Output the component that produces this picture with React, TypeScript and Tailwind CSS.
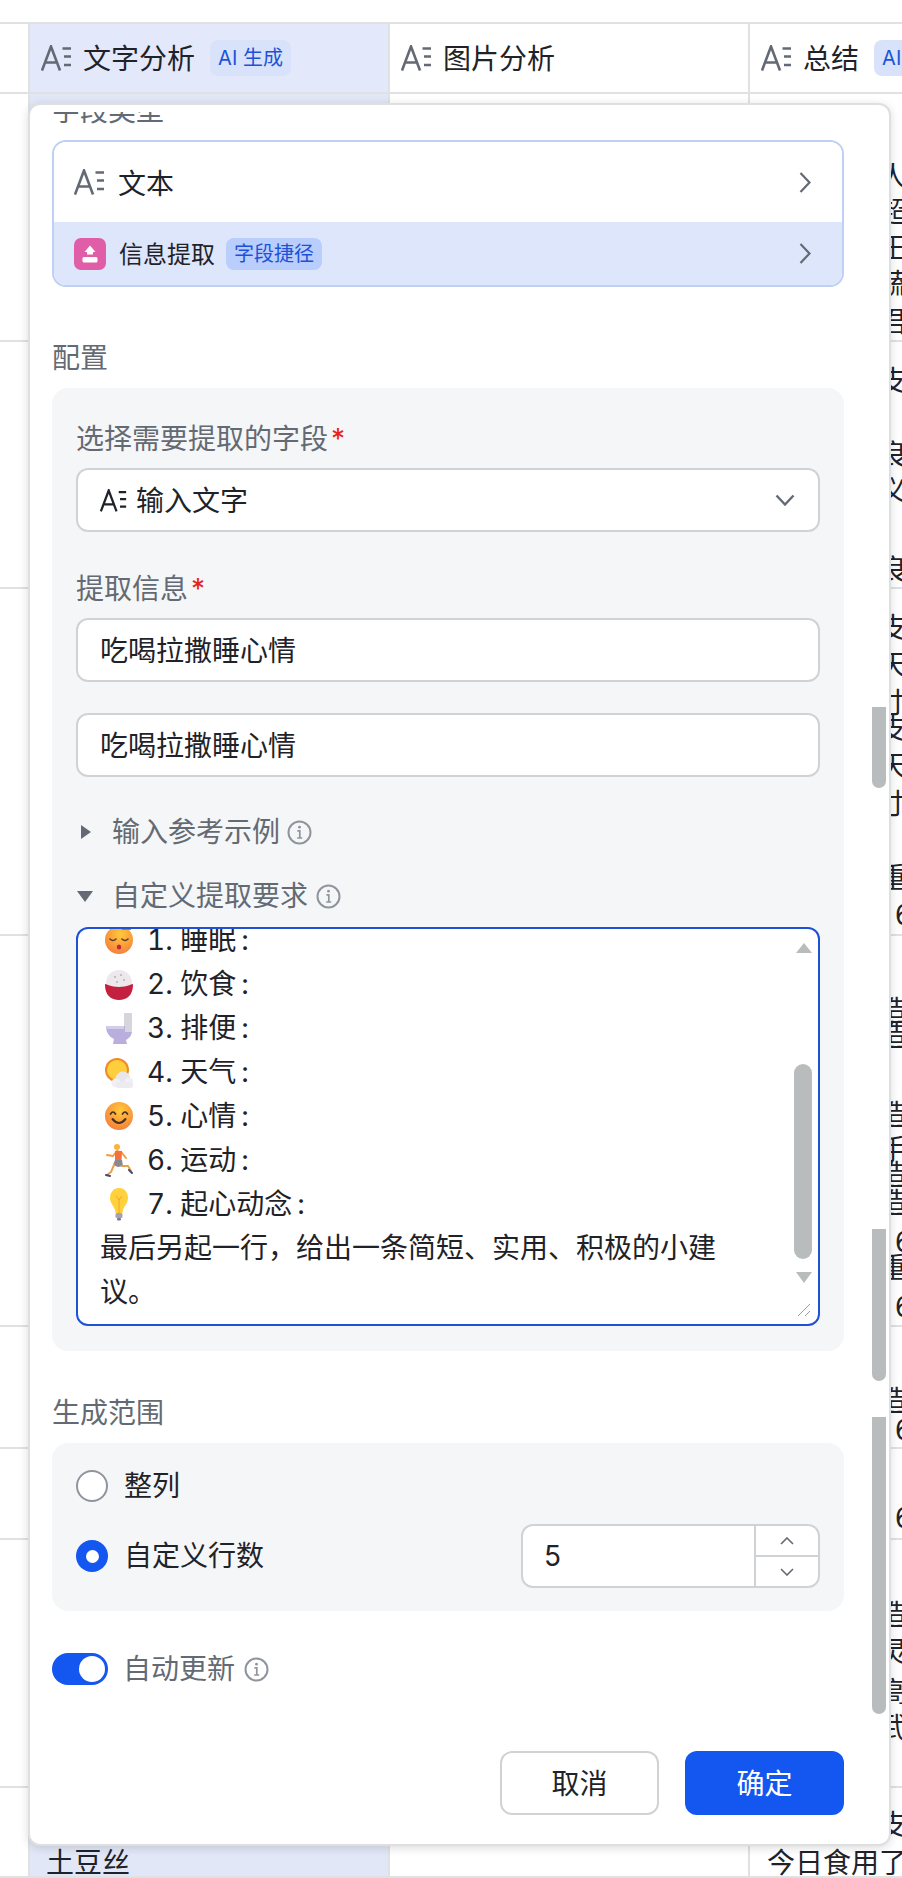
import type { ReactNode } from 'react';

const lineRows: { cls: string; lines: [string, string][] }[] = [
    {
        cls: 'h-[248px]',
        lines: [
            ['mt-[69px]', '今日记录人'],
            ['mt-[7px]', '今日心情超'],
            ['mt-[8px]', '今日工作王'],
            ['mt-[8px]', '今日早餐蔬'],
            ['mt-[10px]', '今日晚餐君'],
        ],
    },
    {
        cls: 'h-[247px]',
        lines: [
            ['mt-[25px]', '今日午后支'],
            ['mt-[46px]', '今日晚间良'],
            ['mt-[8px]', '今日心得义'],
            ['mt-[51px]', '今日总结良'],
        ],
    },
    {
        cls: 'h-[347px]',
        lines: [
            ['mt-[25px]', '今日午后支'],
            ['mt-[9px]', '今日晚间天'],
            ['mt-[10px]', '今日总结寸'],
            ['-mt-[2px]', '今日午后支'],
            ['mt-[9px]', '今日晚间天'],
            ['mt-[10px]', '今日总结寸'],
            ['mt-[17px]', '今日工作,'],
            ['mt-[1px]', '今日晚上重'],
            ['mt-[9px]', '今日用量: 6'],
        ],
    },
    {
        cls: 'h-[391px]',
        lines: [
            ['mt-[61px]', '今日晚上造'],
            ['-mt-[3px]', '今日晚间造'],
            ['mt-[51px]', '今日早上造'],
            ['mt-[7px]', '今日练习手'],
            ['-mt-[3px]', '今日午后造'],
            ['mt-[0px]', '今日晚间造'],
            ['mt-[11px]', '今日用量: 6'],
            ['-mt-[2px]', '今日晚上重'],
            ['mt-[11px]', '今日用量: 6'],
        ],
    },
    {
        cls: 'h-[122px]',
        lines: [
            ['mt-[60px]', '今日早上造'],
            ['mt-[1px]', '今日用量: 6'],
        ],
    },
    { cls: 'h-[91px]', lines: [['mt-[55px]', '今日用量: 6']] },
    {
        cls: 'h-[248px]',
        lines: [
            ['mt-[61px]', '今日早上造'],
            ['mt-[9px]', '今日午后灵'],
            ['mt-[12px]', '今日晚间高'],
            ['mt-[8px]', '今日总结武'],
        ],
    },
    {
        cls: 'h-[90px]',
        lines: [
            ['mt-[23px]', '今日午后支'],
            ['mt-[10px]', '今日食用了'],
        ],
    },
];

function TextIcon({ className }: { className: string }) {
    return (
        <svg className={className} viewBox="0 0 31 26" fill="none" stroke="currentColor" strokeWidth={2.6}>
            <path d="M1 25.5 10 1.5 19 25.5M4.3 17.5H15.7" />
            <path d="M21.5 3.5H30M23 11.5H30M23 20H30" />
        </svg>
    );
}

function InfoIcon() {
    return (
        <svg className="w-[25px] h-[25px] shrink-0 text-[#8f959e]" viewBox="0 0 25 25" fill="none" stroke="currentColor">
            <circle cx="12.5" cy="12.5" r="11" strokeWidth={2} />
            <circle cx="12.5" cy="7.2" r="1.4" fill="currentColor" stroke="none" />
            <path d="M10.4 10.8h2.4v7M10.2 18h5" strokeWidth={1.7} />
        </svg>
    );
}

function Chevron({ className }: { className: string }) {
    return (
        <svg className={className} viewBox="0 0 12 21" fill="none" stroke="currentColor" strokeWidth={2.2}>
            <path d="M1.5 1 10.5 10.5 1.5 20" />
        </svg>
    );
}

function Badge({ children, className }: { children: ReactNode; className: string }) {
    return <span className={`flex items-center justify-center rounded-lg text-[20px] text-[#1d52d8] whitespace-nowrap ${className}`}>{children}</span>;
}

function SectionLabel({ children, className }: { children: ReactNode; className: string }) {
    return <div className={`h-10 leading-[42px] text-[28px] text-[#646a73] ${className}`}>{children}</div>;
}

function Required({ children, className }: { children: ReactNode; className: string }) {
    return (
        <div className={`h-10 leading-[42px] text-[28px] text-[#646a73] flex ${className}`}>
            {children}
            <span className="text-[#e5231d] ml-[3px]">*</span>
        </div>
    );
}

function Header({ title, cls, badge }: { title: string; cls: string; badge?: boolean }) {
    return (
        <div className={`border-l-2 border-[#e0e1e3] flex items-center pl-[11px] overflow-hidden ${cls}`}>
            <TextIcon className="w-[31px] h-[26px] shrink-0 text-[#646a73]" />
            <span className="ml-[11px] pt-[2px] text-[28px] text-[#1f2329] whitespace-nowrap">{title}</span>
            {badge && (
                <Badge className="ml-[15px] w-[81px] h-9 shrink-0 bg-[#d8e2fa]">AI 生成</Badge>
            )}
        </div>
    );
}

function SleepFace() {
    return (
        <svg className="w-7 h-9 shrink-0" viewBox="0 0 28 36">
            <defs>
                <radialGradient id="sf" cx="0.55" cy="0.3" r="0.8">
                    <stop offset="0" stopColor="#ffc93a" />
                    <stop offset="1" stopColor="#f4773c" />
                </radialGradient>
            </defs>
            <circle cx="14" cy="18" r="14" fill="url(#sf)" />
            <path d="M5 17q3 3 6 0M17 17q3 3 6 0" fill="none" stroke="#5b3a2c" strokeWidth="1.6" strokeLinecap="round" />
            <ellipse cx="14" cy="25" rx="2.2" ry="2.6" fill="#c0243e" />
            <path d="M18 2h7l-6 5h7" fill="none" stroke="#2f9fe8" strokeWidth="2" />
        </svg>
    );
}

function RiceBowl() {
    return (
        <svg className="w-7 h-9 shrink-0" viewBox="0 0 28 36">
            <circle cx="14" cy="17" r="13" fill="#ece8ec" />
            <circle cx="10" cy="11" r="1" fill="#b8b2b8" />
            <circle cx="16" cy="9" r="1" fill="#b8b2b8" />
            <circle cx="19" cy="14" r="1" fill="#b8b2b8" />
            <circle cx="12" cy="16" r="1" fill="#b8b2b8" />
            <path d="M0 19C0 16 3 21 14 21S28 16 28 19C28 29 22 34 14 34S0 29 0 19Z" fill="#c4203f" />
        </svg>
    );
}

function Toilet() {
    return (
        <svg className="w-7 h-9 shrink-0" viewBox="0 0 28 36">
            <rect x="19" y="3" width="8" height="19" rx="1" fill="#d8d4dc" />
            <path d="M1 16H20V22H27C26 27 23 29 21 30L22 34H8L9 29C4 27 1 22 1 16Z" fill="#b9aedd" />
            <path d="M1 16H19V19H2Z" fill="#d4cdea" />
        </svg>
    );
}

function SunCloud() {
    return (
        <svg className="w-7 h-9 shrink-0" viewBox="0 0 28 36">
            <circle cx="12" cy="16" r="12" fill="#f08a24" />
            <circle cx="12" cy="16" r="10" fill="#ffce3d" />
            <circle cx="18" cy="25" r="7.5" fill="#e8e6ec" />
            <circle cx="24" cy="28" r="4.5" fill="#f2f0f4" />
            <circle cx="11" cy="29" r="4.6" fill="#f2f0f4" />
            <rect x="11" y="28" width="17" height="6" rx="3" fill="#ecebf0" />
        </svg>
    );
}

function SmileFace() {
    return (
        <svg className="w-7 h-9 shrink-0" viewBox="0 0 28 36">
            <defs>
                <radialGradient id="sm" cx="0.55" cy="0.3" r="0.8">
                    <stop offset="0" stopColor="#ffc93a" />
                    <stop offset="1" stopColor="#f4773c" />
                </radialGradient>
            </defs>
            <circle cx="14" cy="18" r="14" fill="url(#sm)" />
            <path d="M5.5 16q2.5-4 5 0M17.5 16q2.5-4 5 0" fill="none" stroke="#4a2f25" strokeWidth="1.7" strokeLinecap="round" />
            <path d="M7.5 21q6.5 8 13 0" fill="none" stroke="#4a2f25" strokeWidth="2" strokeLinecap="round" />
        </svg>
    );
}

function Runner() {
    return (
        <svg className="w-7 h-9 shrink-0" viewBox="0 0 28 36">
            <circle cx="12" cy="5" r="3" fill="#fbb13c" />
            <path d="M2 13 8 14 12 9 17 11 21 16" fill="none" stroke="#f79a3a" strokeWidth="2" strokeLinecap="round" strokeLinejoin="round" />
            <path d="M10 9H17L16.5 19H10Z" fill="#f2713c" />
            <path d="M10 18H17L18 24 13 25 8 23Z" fill="#8a8790" />
            <path d="M9 23 6 30 2 33M17 24 23 24 26 29" fill="none" stroke="#e8a04c" strokeWidth="2" strokeLinecap="round" strokeLinejoin="round" />
            <path d="M1 33 5 34M24 28 27 31" stroke="#4a4a70" strokeWidth="2" strokeLinecap="round" />
        </svg>
    );
}

function Bulb() {
    return (
        <svg className="w-7 h-9 shrink-0" viewBox="0 0 28 36">
            <path d="M14 2C8 2 5 7 5 12C5 18 10 20 10.5 27H17.5C18 20 23 18 23 12C23 7 20 2 14 2Z" fill="#ffd23d" />
            <path d="M11 10 14 14 17 10M14 14V27" fill="none" stroke="#f1a42a" strokeWidth="1" />
            <rect x="10.5" y="27" width="7" height="5" rx="1.5" fill="#a79fb4" />
            <rect x="12" y="32" width="4" height="2.5" rx="1" fill="#7f7790" />
        </svg>
    );
}

const items: [ReactNode, string][] = [
    [<SleepFace />, '1. 睡眠'],
    [<RiceBowl />, '2. 饮食'],
    [<Toilet />, '3. 排便'],
    [<SunCloud />, '4. 天气'],
    [<SmileFace />, '5. 心情'],
    [<Runner />, '6. 运动'],
    [<Bulb />, '7. 起心动念'],
];

function TextInput() {
    return (
        <div className="h-[64px] rounded-xl border-2 border-[#d0d3d6] bg-white flex items-center pl-[18px] pt-[2px] text-[28px] text-[#1f2329]">
            <span className="ml-[4px]">吃喝拉撒睡心情</span>
        </div>
    );
}

export default function App() {
    return (
        <div className="relative w-[902px] h-[1878px] overflow-hidden bg-white pt-[22px] font-['Inter','Noto_Sans_CJK_SC',sans-serif]">
            {/* Table behind the dialog */}
            <div className="grid grid-cols-[28px_360px_360px_154px] h-[72px] border-y-2 border-[#e0e1e3]">
                <div />
                <Header title="文字分析" cls="bg-[#e3e9fb]" badge />
                <Header title="图片分析" cls="" />
                <Header title="总结" cls="" badge />
            </div>
            {lineRows.map((row, i) => (
                <div key={i} className={`grid grid-cols-[28px_360px_360px_154px] border-b-2 border-[#e0e1e3] overflow-hidden ${row.cls}`}>
                    <div />
                    <div className="bg-[#e1e7f7] border-l-2 border-[#e0e1e3] pl-[16px] text-[28px] text-[#1f2329]">
                        {i === 7 && <p className="mt-[61px] h-7 leading-7">土豆丝</p>}
                    </div>
                    <div className="border-l-2 border-[#e0e1e3]" />
                    <div className="border-l-2 border-[#e0e1e3] pl-[17px] text-[28px] text-[#1f2329]">
                        {row.lines.map(([cls, text], j) => (
                            <p key={j} className={`h-7 leading-7 whitespace-nowrap ${cls}`}>{text}</p>
                        ))}
                    </div>
                </div>
            ))}

            {/* Dialog */}
            <div className="absolute left-[28px] top-[103px] w-[863px] h-[1743px] bg-white rounded-xl border-2 border-[#dedfe1] shadow-[0_2px_10px_rgba(0,0,0,0.14)] pt-[7px] pl-[22px] pr-[45px] flex flex-col">
                <div className="absolute left-[842px] top-[602px] w-[14px] h-[81px] bg-[#b9bcbc] rounded-b-lg" />
                <div className="absolute left-[842px] top-[1124px] w-[14px] h-[152px] bg-[#b9bcbc] rounded-b-lg" />
                <div className="absolute left-[842px] top-[1312px] w-[14px] h-[297px] bg-[#b9bcbc] rounded-b-lg" />

                <div className="flex-1 min-h-0 overflow-hidden">
                    <SectionLabel className="-mt-[22px]">字段类型</SectionLabel>

                    <div className="mt-[10px] h-[147px] rounded-[14px] border-2 border-[#bfd0f5] overflow-hidden flex flex-col">
                        <div className="h-[80px] flex items-center pl-[20px] pr-[31px] bg-white">
                            <TextIcon className="w-[31px] h-[26px] text-[#646a73]" />
                            <span className="ml-[13px] pt-[3px] text-[28px] text-[#1f2329]">文本</span>
                            <Chevron className="ml-auto w-[12px] h-[21px] text-[#646a73]" />
                        </div>
                        <div className="flex-1 bg-[#dee6fb] flex items-center pl-[20px] pr-[31px]">
                            <span className="w-8 h-8 rounded-[7px] bg-[#e05ea8] flex items-center justify-center">
                                <svg className="w-5 h-5" viewBox="0 0 20 20" fill="white">
                                    <path d="M10 1.5 15.5 8H13V10.5H7V8H4.5Z" />
                                    <rect x="2.5" y="13" width="15" height="5.5" rx="1.5" />
                                </svg>
                            </span>
                            <span className="ml-[13px] pt-[2px] text-[24px] text-[#1f2329]">信息提取</span>
                            <Badge className="ml-[11px] w-[96px] h-8 bg-[#bacefd]">字段捷径</Badge>
                            <Chevron className="ml-auto w-[12px] h-[21px] text-[#646a73]" />
                        </div>
                    </div>

                    <SectionLabel className="mt-[50px]">配置</SectionLabel>
                    <div className="mt-[11px] rounded-2xl bg-[#f5f6f7] px-[24px] pt-[30px] pb-[25px]">
                        <Required className="">选择需要提取的字段</Required>
                        <div className="mt-[10px] h-[64px] rounded-xl border-2 border-[#d0d3d6] bg-white flex items-center pl-[22px] pr-[23px]">
                            <TextIcon className="w-[27px] h-[23px] text-[#1f2329]" />
                            <span className="ml-[9px] pt-[2px] text-[28px] text-[#1f2329]">输入文字</span>
                            <svg className="ml-auto w-5 h-3 text-[#646a73]" viewBox="0 0 20 12" fill="none" stroke="currentColor" strokeWidth={2.4}>
                                <path d="M1.5 1.5 10 10.5 18.5 1.5" />
                            </svg>
                        </div>

                        <Required className="mt-[36px]">提取信息</Required>
                        <div className="mt-[10px]">
                            <TextInput />
                        </div>
                        <div className="mt-[31px]">
                            <TextInput />
                        </div>

                        <div className="mt-[35px] h-10 flex items-center text-[28px] text-[#646a73]">
                            <svg className="ml-[5px] w-[10px] h-[14px]" viewBox="0 0 10 14" fill="currentColor">
                                <path d="M0 0 10 7 0 14Z" />
                            </svg>
                            <span className="ml-[21px]">输入参考示例</span>
                            <span className="ml-[7px]"><InfoIcon /></span>
                        </div>
                        <div className="mt-[24px] h-10 flex items-center text-[28px] text-[#646a73]">
                            <svg className="ml-[1px] w-4 h-[11px]" viewBox="0 0 16 11" fill="currentColor">
                                <path d="M0 0H16L8 11Z" />
                            </svg>
                            <span className="ml-[19px]">自定义提取要求</span>
                            <span className="ml-[8px]"><InfoIcon /></span>
                        </div>

                        {/* Scrolled text area */}
                        <div className="relative mt-[11px] h-[399px] rounded-xl border-2 border-[#1d52d8] bg-white overflow-hidden pl-[22px]">
                            <div className="-mt-[11px] w-[630px] text-[28px] leading-[44px] text-[#1f2329]">
                                {items.map(([icon, text]) => (
                                    <div key={text} className="h-[44px] flex items-center tabular-nums">
                                        <span className="ml-[5px] mr-[14px] flex items-center">{icon}</span>
                                        {text}
                                        <span className="ml-[5px]">:</span>
                                    </div>
                                ))}
                                <div>{'最后另起一行\uFF0C给出一条简短、实用、积极的小建议。'}</div>
                            </div>
                            <div className="absolute left-[718px] top-[14px] w-0 h-0 border-x-[8px] border-x-transparent border-b-[10px] border-b-[#b9bcbc]" />
                            <div className="absolute left-[716px] top-[135px] w-[18px] h-[195px] rounded-full bg-[#b9bcbc]" />
                            <div className="absolute left-[718px] top-[343px] w-0 h-0 border-x-[8px] border-x-transparent border-t-[11px] border-t-[#b9bcbc]" />
                            <svg className="absolute left-[719px] top-[374px] w-[14px] h-[14px] text-[#9a9da0]" viewBox="0 0 14 14" fill="none" stroke="currentColor" strokeWidth={1}>
                                <path d="M1 13 13 1M8 13 13 8" />
                            </svg>
                        </div>
                    </div>

                    <SectionLabel className="mt-[41px]">生成范围</SectionLabel>
                    <div className="mt-[11px] h-[168px] rounded-2xl bg-[#f5f6f7] px-[24px] pt-[27px]">
                        <div className="h-8 flex items-center text-[28px] text-[#1f2329]">
                            <span className="w-8 h-8 rounded-full border-2 border-[#8f959e] bg-white" />
                            <span className="ml-[16px]">整列</span>
                        </div>
                        <div className="mt-[22px] flex items-center text-[28px] text-[#1f2329]">
                            <span className="w-8 h-8 rounded-full bg-[#1456f0] flex items-center justify-center">
                                <span className="w-[13px] h-[13px] rounded-full bg-white" />
                            </span>
                            <span className="ml-[16px]">自定义行数</span>
                            <div className="ml-auto w-[299px] h-[64px] rounded-xl border-2 border-[#d0d3d6] bg-white flex">
                                <div className="flex-1 flex items-center pl-[21px]">5</div>
                                <div className="w-[64px] border-l-2 border-[#d0d3d6] flex flex-col">
                                    <div className="flex-1 border-b-2 border-[#d0d3d6] flex items-center justify-center">
                                        <svg className="w-[14px] h-2 text-[#646a73]" viewBox="0 0 14 8" fill="none" stroke="currentColor" strokeWidth={1.6}>
                                            <path d="M1 7 7 1 13 7" />
                                        </svg>
                                    </div>
                                    <div className="flex-1 flex items-center justify-center">
                                        <svg className="w-[14px] h-2 text-[#646a73]" viewBox="0 0 14 8" fill="none" stroke="currentColor" strokeWidth={1.6}>
                                            <path d="M1 1 7 7 13 1" />
                                        </svg>
                                    </div>
                                </div>
                            </div>
                        </div>
                    </div>

                    <div className="mt-[42px] h-8 flex items-center text-[28px] text-[#646a73]">
                        <span className="w-14 h-8 rounded-full bg-[#1456f0] flex items-center justify-end pr-[3px]">
                            <span className="w-[26px] h-[26px] rounded-full bg-white" />
                        </span>
                        <span className="ml-[15px]">自动更新</span>
                        <span className="ml-[9px]"><InfoIcon /></span>
                    </div>

                    <div className="mt-[66px] flex justify-end gap-[26px]">
                        <button className="w-[159px] h-[64px] rounded-xl border-2 border-[#d0d3d6] bg-white pt-[2px] text-[28px] text-[#1f2329]">取消</button>
                        <button className="w-[159px] h-[64px] rounded-xl bg-[#1456f0] pt-[2px] text-[28px] text-white">确定</button>
                    </div>
                </div>
            </div>
        </div>
    );
}
